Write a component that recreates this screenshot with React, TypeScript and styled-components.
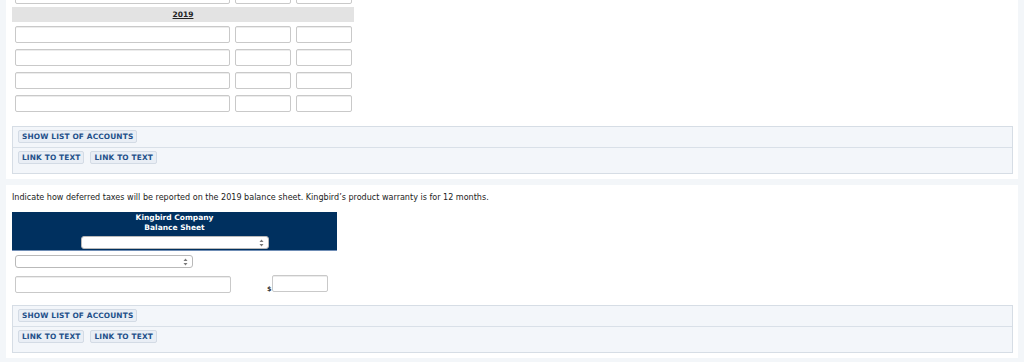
import React from "react";
import styled, { createGlobalStyle } from "styled-components";

const GlobalStyle = createGlobalStyle`
  html, body {
    margin: 0;
    padding: 0;
    background: #f3f6f9;
    font-family: "DejaVu Sans", Verdana, sans-serif;
  }
`;

const Page = styled.div`
  display: flex;
  flex-direction: column;
  gap: 6px;
  padding: 0 6px;
  margin-top: -13px;
  width: 1012px;
`;

const Panel = styled.div<{ $top?: number; $bottom?: number }>`
  background: #ffffff;
  padding: ${({ $top }) => $top ?? 0}px 6px ${({ $bottom }) => $bottom ?? 5}px;
  display: flex;
  flex-direction: column;
`;

const Table = styled.div`
  width: 342px;
  display: flex;
  flex-direction: column;
`;

const InputRow = styled.div<{ $gap?: number }>`
  display: flex;
  gap: 5px;
  padding-left: 3px;
  margin-bottom: ${({ $gap }) => $gap ?? 6}px;
`;

const TextBox = styled.div<{ $w: number }>`
  width: ${({ $w }) => $w}px;
  height: 17px;
  box-sizing: border-box;
  border: 1px solid #c9c9c9;
  border-radius: 2px;
  background: #fff;
  box-shadow: inset 0 1px 0 #ececec;
`;

const HeaderRow = styled.div`
  height: 15px;
  background: #e3e3e3;
  display: flex;
  align-items: center;
  justify-content: center;
  margin-bottom: 4px;
`;

const Year = styled.span`
  font-size: 7.5px;
  font-weight: bold;
  color: #222;
  text-decoration: underline;
`;

const Tools = styled.div<{ $top: number }>`
  margin-top: ${({ $top }) => $top}px;
  width: 1001px;
  box-sizing: border-box;
  border: 1px solid #d6dde5;
  background: #f3f6fa;
`;

const ToolRow = styled.div<{ $last?: boolean }>`
  display: flex;
  gap: 6px;
  padding: ${({ $last }) => ($last ? "3px 5px 9px" : "3px 5px 4px")};
  border-bottom: ${({ $last }) => ($last ? "none" : "1px solid #d9e0e8")};
`;

const ToolButton = styled.span`
  display: inline-flex;
  align-items: center;
  height: 11px;
  padding: 0 3px;
  border: 1px solid #d3dbe5;
  border-radius: 2px;
  background: #e9eef5;
  color: #23508a;
  font-size: 7.4px;
  font-weight: bold;
  letter-spacing: 0.15px;
  white-space: nowrap;
`;

const Prompt = styled.p`
  margin: 0 0 9px;
  font-size: 8.05px;
  line-height: 10px;
  color: #222;
`;

const Statement = styled.div`
  width: 325px;
  background: #00305f;
  border-bottom: 1px solid #6f8db5;
  display: flex;
  flex-direction: column;
  align-items: center;
  padding: 1px 0 1px;
`;

const StatementTitle = styled.div`
  color: #fff;
  font-size: 7.5px;
  font-weight: bold;
  line-height: 10px;
  text-align: center;
`;

const SelectBox = styled.div<{ $w: number }>`
  width: ${({ $w }) => $w}px;
  height: 13px;
  box-sizing: border-box;
  border: 1px solid #b9b9b9;
  border-radius: 3px;
  background: #fff;
  display: flex;
  align-items: center;
  justify-content: flex-end;
  padding-right: 4px;
`;

const StatementSelect = styled(SelectBox)`
  margin-top: 3px;
`;

const Lines = styled.div`
  display: flex;
  flex-direction: column;
  gap: 7px;
  padding: 4px 0 0 3px;
`;

const AmountRow = styled.div`
  display: flex;
  align-items: flex-end;
`;

const Dollar = styled.span`
  margin-left: 36px;
  font-size: 6.5px;
  font-weight: bold;
  color: #333;
  line-height: 8px;
`;

const AmountBox = styled(TextBox)`
  margin-bottom: 1px;
`;

const Arrows = () => (
  <svg width="5" height="8" viewBox="0 0 5 8">
    <path d="M2.5 0.5 L4.5 3 L0.5 3 Z" fill="#777" />
    <path d="M2.5 7.5 L4.5 5 L0.5 5 Z" fill="#777" />
  </svg>
);

const Row = ({ gap }: { gap?: number }) => (
  <InputRow $gap={gap}>
    <TextBox $w={215} />
    <TextBox $w={56} />
    <TextBox $w={56} />
  </InputRow>
);

const ToolBar = ({ top }: { top: number }) => (
  <Tools $top={top}>
    <ToolRow>
      <ToolButton>SHOW LIST OF ACCOUNTS</ToolButton>
    </ToolRow>
    <ToolRow $last>
      <ToolButton>LINK TO TEXT</ToolButton>
      <ToolButton>LINK TO TEXT</ToolButton>
    </ToolRow>
  </Tools>
);

export default function App() {
  return (
    <>
      <GlobalStyle />
      <Page>
        <Panel>
          <Table>
            <Row gap={3} />
            <HeaderRow>
              <Year>2019</Year>
            </HeaderRow>
            <Row />
            <Row />
            <Row />
            <Row gap={0} />
          </Table>
          <ToolBar top={14} />
        </Panel>
        <Panel $top={8}>
          <Prompt>
            Indicate how deferred taxes will be reported on the 2019 balance
            sheet. Kingbird’s product warranty is for 12 months.
          </Prompt>
          <Statement>
            <StatementTitle>Kingbird Company</StatementTitle>
            <StatementTitle>Balance Sheet</StatementTitle>
            <StatementSelect $w={188}>
              <Arrows />
            </StatementSelect>
          </Statement>
          <Lines>
            <SelectBox $w={178}>
              <Arrows />
            </SelectBox>
            <AmountRow>
              <TextBox $w={216} />
              <Dollar>$</Dollar>
              <AmountBox $w={56} />
            </AmountRow>
          </Lines>
          <ToolBar top={12} />
        </Panel>
      </Page>
    </>
  );
}
